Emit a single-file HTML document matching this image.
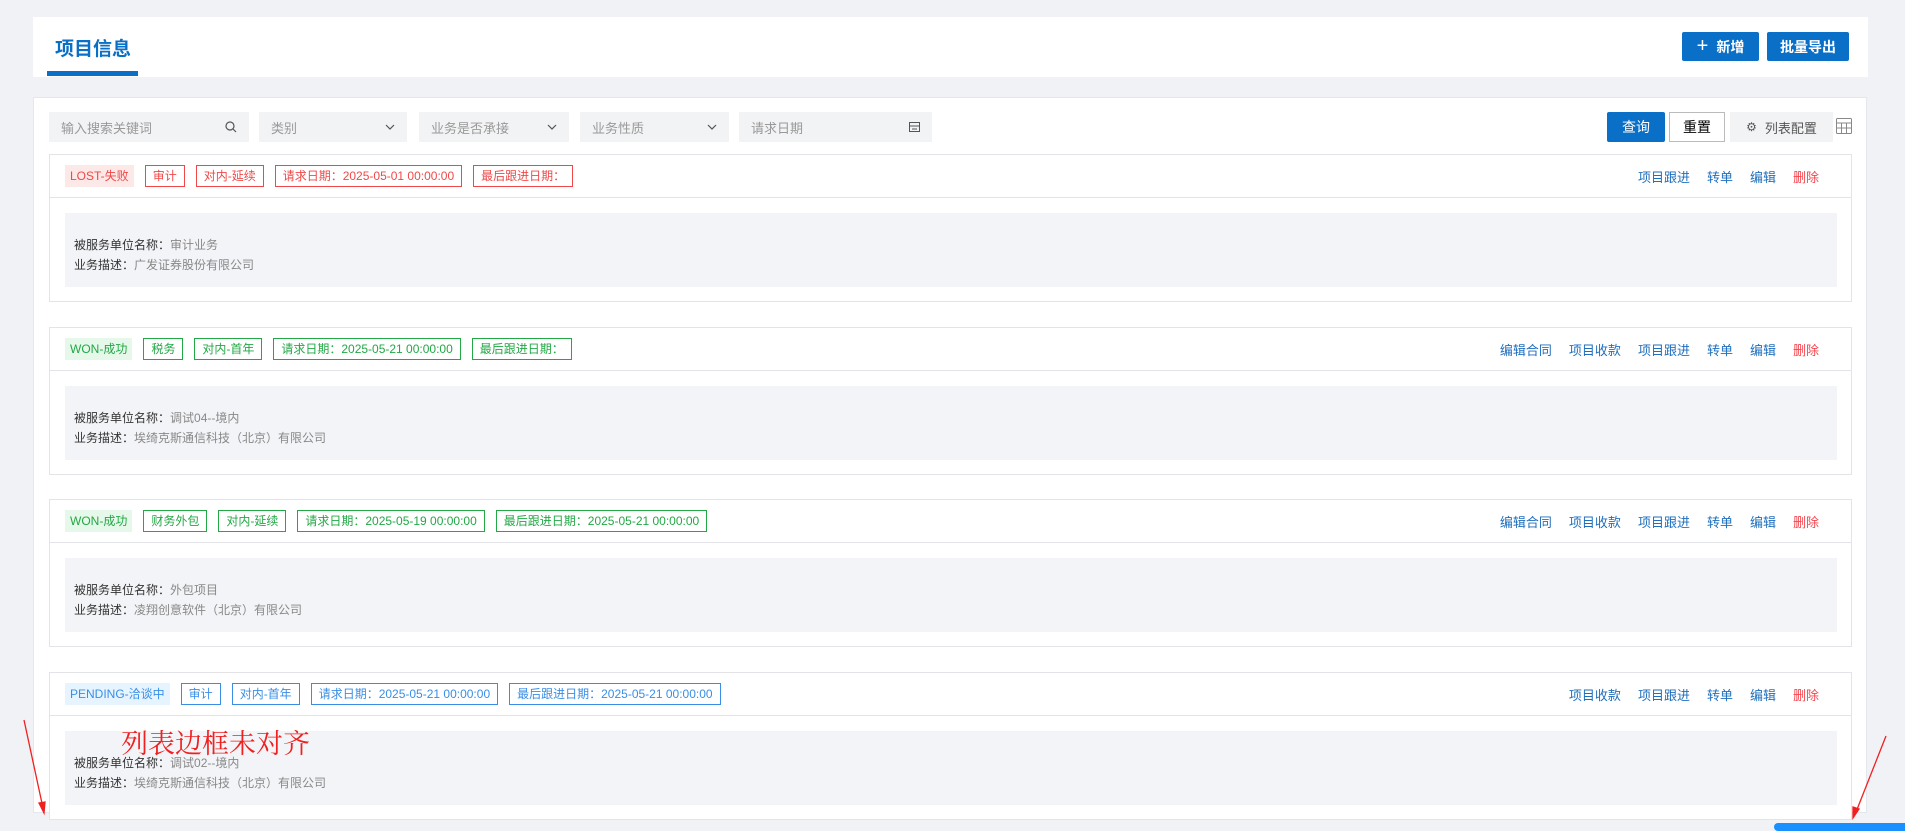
<!DOCTYPE html>
<html><head><meta charset="utf-8"><style>
*{box-sizing:border-box;margin:0;padding:0}
body{width:1905px;height:829px;background:#f0f2f5;font-family:"Liberation Sans","Noto Sans CJK SC",sans-serif;position:relative;overflow:hidden;font-size:13px}
.abs{position:absolute}
.hdr{left:33px;top:17px;width:1835px;height:60px;background:#fff}
.title{left:55px;top:34px;font-size:19px;font-weight:bold;color:#0a6fc7}
.uline{left:47px;top:71px;width:91px;height:5px;background:#0a6fc7}
.btn{background:#0a6fc7;color:#fff;font-size:14px;font-weight:bold;display:flex;align-items:center;justify-content:center;border-radius:2px}
.main{left:33px;top:97px;width:1834px;height:716px;background:#fff;border:1px solid #e4e7ed}
.f{background:#f2f3f5;height:30px;top:112px;color:#999;font-size:13px;display:flex;align-items:center;padding:0 12px;justify-content:space-between}
.card{left:49px;width:1803px;height:148px;background:#fff;border:1px solid #e2e4e8}
.ch{height:43px;border-bottom:1px solid #e2e4e8;display:flex;align-items:center;padding-left:15px;position:relative}
.tag{height:22px;line-height:20px;font-size:12px;padding:0 7px;border:1px solid;margin-right:11px;white-space:nowrap}
.tag.s{padding:0 4px}
.r{color:#f04848;border-color:#f04848}
.g{color:#22a845;border-color:#22a845}
.b{color:#3a8ee6;border-color:#3a8ee6}
.acts{position:absolute;right:32px;top:0;height:43px;display:flex;align-items:center;gap:17px;color:#1f6fbd;font-size:13px}
.acts .d{color:#f5454e}
.bd{position:absolute;left:15px;top:58px;width:1772px;height:74px;background:#f3f4f7;padding:22px 0 0 9px;font-size:12px;line-height:20px;color:#333}
.bd span{color:#888}
</style></head><body>
<div class="abs hdr"></div>
<div class="abs title">项目信息</div>
<div class="abs uline"></div>
<div class="abs btn" style="left:1682px;top:32px;width:77px;height:29px"><span style="font-weight:normal;font-size:20px;margin-right:8px">+</span>新增</div>
<div class="abs btn" style="left:1767px;top:32px;width:82px;height:29px">批量导出</div>
<div class="abs main"></div>
<div class="abs f" style="left:49px;width:200px">输入搜索关键词<svg width="12" height="12" viewBox="0 0 12 12"><circle cx="5" cy="5" r="4" fill="none" stroke="#555" stroke-width="1.2"/><path d="M8 8l3 3" stroke="#555" stroke-width="1.2"/></svg></div>
<div class="abs f" style="left:259px;width:148px">类别<svg width="10" height="6"><path d="M1 1l4 4 4-4" fill="none" stroke="#555" stroke-width="1.2"/></svg></div>
<div class="abs f" style="left:419px;width:150px">业务是否承接<svg width="10" height="6"><path d="M1 1l4 4 4-4" fill="none" stroke="#555" stroke-width="1.2"/></svg></div>
<div class="abs f" style="left:580px;width:149px">业务性质<svg width="10" height="6"><path d="M1 1l4 4 4-4" fill="none" stroke="#555" stroke-width="1.2"/></svg></div>
<div class="abs f" style="left:739px;width:193px">请求日期<svg width="11" height="10"><rect x="0.5" y="0.5" width="10" height="9" fill="none" stroke="#555"/><path d="M0 4h11M3 7h5" stroke="#555"/></svg></div>
<div class="abs btn" style="left:1607px;top:112px;width:58px;height:30px;font-weight:normal">查询</div>
<div class="abs" style="left:1669px;top:112px;width:56px;height:30px;border:1px solid #bbb;display:flex;align-items:center;justify-content:center;font-size:14px;color:#000">重置</div>
<div class="abs f" style="left:1730px;width:103px;color:#555;justify-content:center;gap:8px"><span style="font-size:12px">⚙</span>列表配置</div>
<svg class="abs" style="left:1836px;top:118px" width="16" height="16" viewBox="0 0 16 16"><rect x="0.5" y="0.5" width="15" height="15" rx="1" fill="none" stroke="#888"/><path d="M0.5 5h15M0.5 10h15M5.5 5v11M10.5 5v11" stroke="#888"/></svg>

<div class="abs card" style="top:154px"><div class="ch">
<span class="tag r s" style="background:#fde8e8;border-color:#fde8e8">LOST-失败</span><span class="tag r">审计</span><span class="tag r">对内-延续</span><span class="tag r">请求日期：2025-05-01 00:00:00</span><span class="tag r">最后跟进日期：</span>
<div class="acts"><span>项目跟进</span><span>转单</span><span>编辑</span><span class="d">删除</span></div></div>
<div class="bd">被服务单位名称：<span>审计业务</span><br>业务描述：<span>广发证券股份有限公司</span></div></div>

<div class="abs card" style="top:327px"><div class="ch">
<span class="tag g s" style="background:#e5f8e9;border-color:#e5f8e9">WON-成功</span><span class="tag g">税务</span><span class="tag g">对内-首年</span><span class="tag g">请求日期：2025-05-21 00:00:00</span><span class="tag g">最后跟进日期：</span>
<div class="acts"><span>编辑合同</span><span>项目收款</span><span>项目跟进</span><span>转单</span><span>编辑</span><span class="d">删除</span></div></div>
<div class="bd">被服务单位名称：<span>调试04--境内</span><br>业务描述：<span>埃绮克斯通信科技（北京）有限公司</span></div></div>

<div class="abs card" style="top:499px"><div class="ch">
<span class="tag g s" style="background:#e5f8e9;border-color:#e5f8e9">WON-成功</span><span class="tag g">财务外包</span><span class="tag g">对内-延续</span><span class="tag g">请求日期：2025-05-19 00:00:00</span><span class="tag g">最后跟进日期：2025-05-21 00:00:00</span>
<div class="acts"><span>编辑合同</span><span>项目收款</span><span>项目跟进</span><span>转单</span><span>编辑</span><span class="d">删除</span></div></div>
<div class="bd">被服务单位名称：<span>外包项目</span><br>业务描述：<span>凌翔创意软件（北京）有限公司</span></div></div>

<div class="abs card" style="top:672px"><div class="ch">
<span class="tag b s" style="background:#e6f4ff;border-color:#e6f4ff">PENDING-洽谈中</span><span class="tag b">审计</span><span class="tag b">对内-首年</span><span class="tag b">请求日期：2025-05-21 00:00:00</span><span class="tag b">最后跟进日期：2025-05-21 00:00:00</span>
<div class="acts"><span>项目收款</span><span>项目跟进</span><span>转单</span><span>编辑</span><span class="d">删除</span></div></div>
<div class="bd">被服务单位名称：<span>调试02--境内</span><br>业务描述：<span>埃绮克斯通信科技（北京）有限公司</span></div></div>

<div class="abs" style="left:121px;top:722px;font-size:27px;color:#f02020;font-family:'Noto Serif CJK SC',serif">列表边框未对齐</div>
<svg class="abs" style="left:0;top:0" width="1905" height="829"><g stroke="#f02020" stroke-width="1.3" fill="#f02020"><path d="M24 720L43 808"/><path d="M44 813l-5-10 6-1z"/><path d="M1886 736L1856 812"/><path d="M1853 818l0-11 6 2z"/></g></svg>
<div class="abs" style="left:1774px;top:823px;width:140px;height:8px;border-radius:4px;background:#1890ff"></div>
</body></html>
